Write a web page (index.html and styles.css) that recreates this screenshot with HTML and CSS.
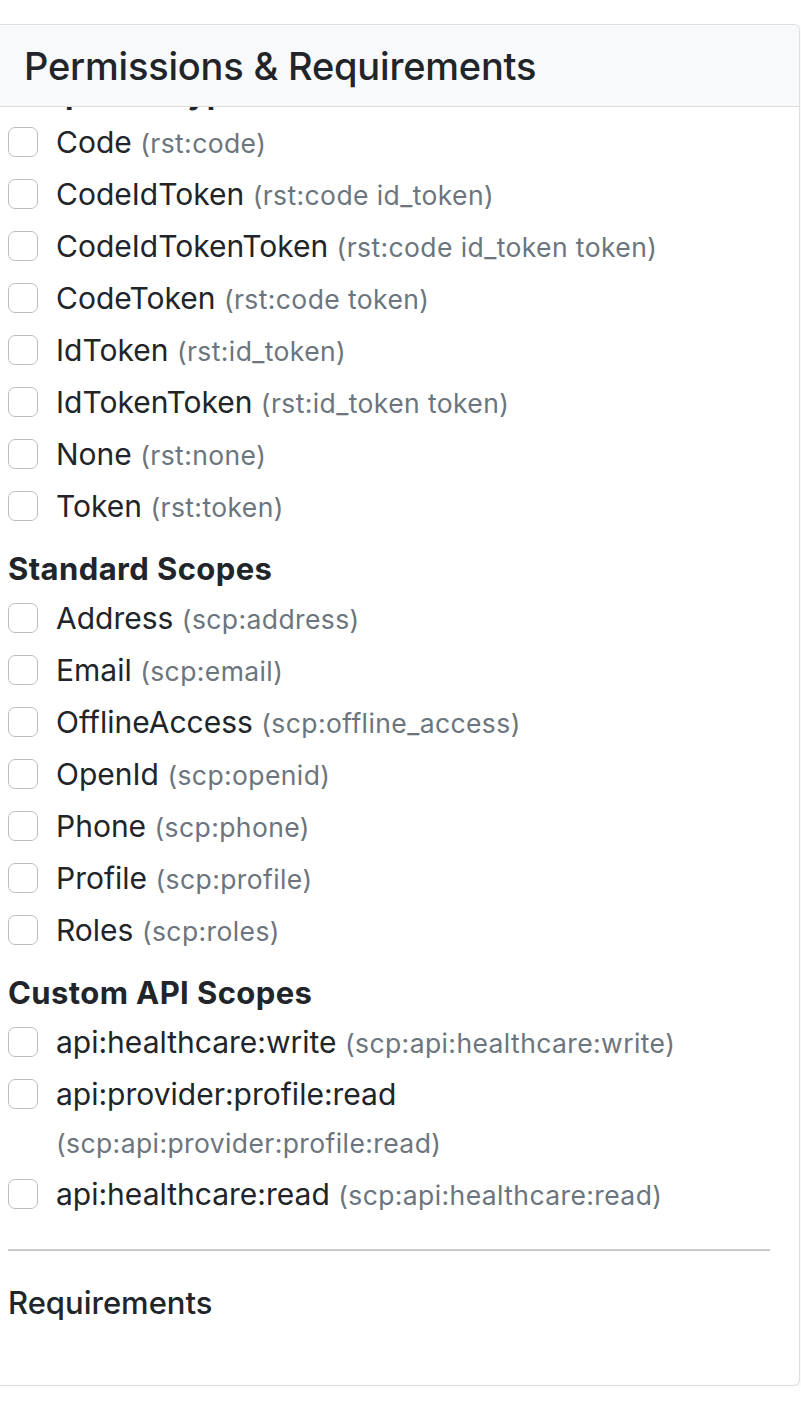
FILE: index.html
```html
<!DOCTYPE html>
<html lang="en">
<head>
<meta charset="utf-8">
<title>Permissions &amp; Requirements</title>
<link rel="stylesheet" href="styles.css">
</head>
<body>
<div class="card">
  <div class="card-header">
    <h2 class="card-title">Permissions &amp; Requirements</h2>
  </div>
  <div class="card-body">
    <h3 class="group-title">Response Types</h3>
    <label class="check"><input type="checkbox"><span class="text">Code <span class="code">(rst:code)</span></span></label>
    <label class="check"><input type="checkbox"><span class="text">CodeIdToken <span class="code">(rst:code id_token)</span></span></label>
    <label class="check"><input type="checkbox"><span class="text">CodeIdTokenToken <span class="code">(rst:code id_token token)</span></span></label>
    <label class="check"><input type="checkbox"><span class="text">CodeToken <span class="code">(rst:code token)</span></span></label>
    <label class="check"><input type="checkbox"><span class="text">IdToken <span class="code">(rst:id_token)</span></span></label>
    <label class="check"><input type="checkbox"><span class="text">IdTokenToken <span class="code">(rst:id_token token)</span></span></label>
    <label class="check"><input type="checkbox"><span class="text">None <span class="code">(rst:none)</span></span></label>
    <label class="check"><input type="checkbox"><span class="text">Token <span class="code">(rst:token)</span></span></label>

    <h3 class="group-title">Standard Scopes</h3>
    <label class="check"><input type="checkbox"><span class="text">Address <span class="code">(scp:address)</span></span></label>
    <label class="check"><input type="checkbox"><span class="text">Email <span class="code">(scp:email)</span></span></label>
    <label class="check"><input type="checkbox"><span class="text">OfflineAccess <span class="code">(scp:offline_access)</span></span></label>
    <label class="check"><input type="checkbox"><span class="text">OpenId <span class="code">(scp:openid)</span></span></label>
    <label class="check"><input type="checkbox"><span class="text">Phone <span class="code">(scp:phone)</span></span></label>
    <label class="check"><input type="checkbox"><span class="text">Profile <span class="code">(scp:profile)</span></span></label>
    <label class="check"><input type="checkbox"><span class="text">Roles <span class="code">(scp:roles)</span></span></label>

    <h3 class="group-title">Custom API Scopes</h3>
    <label class="check"><input type="checkbox"><span class="text">api:healthcare:write <span class="code">(scp:api:healthcare:write)</span></span></label>
    <label class="check"><input type="checkbox"><span class="text">api:provider:profile:read <span class="code">(scp:api:provider:profile:read)</span></span></label>
    <label class="check"><input type="checkbox"><span class="text">api:healthcare:read <span class="code">(scp:api:healthcare:read)</span></span></label>

    <hr class="divider">
    <h4 class="sub-title">Requirements</h4>
  </div>
</div>
</body>
</html>
```
FILE: styles.css
```css
html, body {
  margin: 0;
  padding: 0;
  background: #ffffff;
}
body {
  padding-top: 24px;
  font-family: Inter, "Liberation Sans", sans-serif;
  color: #212529;
}
.card {
  width: 800px;
  box-sizing: border-box;
  border: 1px solid #dedede;
  border-left: 0;
  border-radius: 0 6px 6px 0;
  background: #ffffff;
  box-shadow: 0 4px 8px rgba(0, 0, 0, 0.05);
  overflow: hidden;
}
.card-header {
  position: relative;
  z-index: 1;
  height: 81px;
  background: #f8f9fa;
  border-bottom: 1px solid #dcdcdc;
  display: flex;
  align-items: center;
  padding-left: 24px;
}
.card-title {
  margin: 0;
  font-size: 38px;
  font-weight: 500;
  letter-spacing: -0.2px;
  color: #212529;
}
.card-body {
  margin-top: -31px;
  padding: 0 29px 65px 8px;
}
.group-title {
  margin: 22px 0 8px;
  font-size: 31px;
  line-height: 34px;
  font-weight: 700;
  letter-spacing: 0.4px;
}
.group-title:first-child {
  margin-top: 0;
}
.check {
  display: flex;
  align-items: flex-start;
  margin-bottom: 4px;
  line-height: 48px;
  font-size: 30px;
}
.check input {
  appearance: none;
  -webkit-appearance: none;
  flex: none;
  width: 30px;
  height: 30px;
  margin: 9px 18px 0 0;
  box-sizing: border-box;
  border: 1.5px solid #bdbdbd;
  border-radius: 7px;
  background: #ffffff;
}
.code {
  font-size: 26.5px;
  line-height: 24px;
  letter-spacing: 0.4px;
  color: #6c757d;
}
.divider {
  margin: 31px 0 34px;
  border: 0;
  border-top: 2px solid #c9c9c9;
}
.sub-title {
  margin: 0;
  font-size: 31px;
  line-height: 35px;
  font-weight: 500;
}
```
